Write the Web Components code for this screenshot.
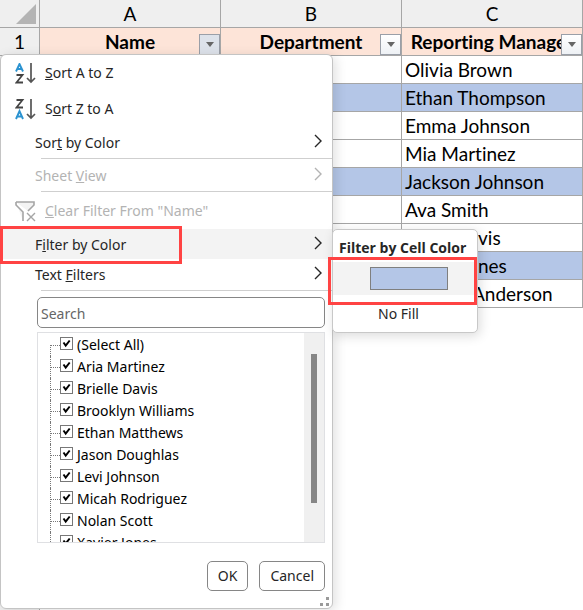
<!DOCTYPE html>
<html lang="en">
<head>
<meta charset="utf-8">
<meta name="viewport" content="width=device-width, initial-scale=1">
<title>Filter by Color</title>
<style>
  body {
    margin: 0;
    min-height: 100vh;
    position: relative;
    overflow: hidden;
    background: #fff;
    color: #262626;
    font: 14px/20px "Noto Sans", "Open Sans", sans-serif;
  }

  filter-menu {
    position: absolute;
    top: 54px;
    left: 0;
  }

  color-submenu {
    position: absolute;
    top: 229px;
    left: 332px;
  }

  mark-box {
    position: absolute;
  }

  .markItem {
    top: 226px;
    left: 0;
    width: 182px;
    height: 38px;
  }

  .markSwatch {
    top: 257px;
    left: 328px;
    width: 149px;
    height: 48px;
  }
</style>
</head>
<body>
  <work-sheet></work-sheet>

  <filter-menu>
    <menu-item size="tall" icon="az"><u>S</u>ort A to Z</menu-item>
    <menu-item size="tall" icon="za">S<u>o</u>rt Z to A</menu-item>
    <menu-item arrow>Sor<u>t</u> by Color</menu-item>
    <menu-line></menu-line>
    <menu-item arrow disabled>Sheet <u>V</u>iew</menu-item>
    <menu-line></menu-line>
    <menu-item size="tall" icon="clear" disabled><u>C</u>lear Filter From "Name"</menu-item>
    <menu-item arrow active>F<u>i</u>lter by Color</menu-item>
    <menu-item arrow>Text <u>F</u>ilters</menu-item>
    <menu-line></menu-line>
    <value-list slot="values">
      <check-item>(Select All)</check-item>
      <check-item>Aria Martinez</check-item>
      <check-item>Brielle Davis</check-item>
      <check-item>Brooklyn Williams</check-item>
      <check-item>Ethan Matthews</check-item>
      <check-item>Jason Doughlas</check-item>
      <check-item>Levi Johnson</check-item>
      <check-item>Micah Rodriguez</check-item>
      <check-item>Nolan Scott</check-item>
      <check-item>Xavier Jones</check-item>
    </value-list>
    <dialog-button slot="actions">OK</dialog-button>
    <dialog-button slot="actions">Cancel</dialog-button>
  </filter-menu>

  <color-submenu>
    <span slot="title">Filter by Cell Color</span>
    No Fill
  </color-submenu>

  <mark-box class="markItem"></mark-box>
  <mark-box class="markSwatch"></mark-box>

<script>
class BaseElement extends HTMLElement {
  constructor() {
    super();
    this.attachShadow({ mode: 'open' });
    const template = document.createElement('template');
    template.innerHTML = this.getTemplate();
    this.shadowRoot.appendChild(template.content.cloneNode(true));
  }
}

class WorkSheet extends BaseElement {
  getTemplate() {
    const columns = ['Name', 'Department', 'Reporting Manager'];
    const managers = [
      'Olivia Brown', 'Ethan Thompson', 'Emma Johnson', 'Mia Martinez',
      'Jackson Johnson', 'Ava Smith', 'Emily Davis', 'Oliver Jones', 'William Anderson'
    ];
    // rows that carry the blue cell fill
    const filled = [1, 4, 7];

    const rows = managers.map((name, i) => `
      <tr class="${filled.includes(i) ? 'filled' : ''}">
        <th scope="row">${i + 2}</th><td></td><td></td><td>${name}</td>
      </tr>`).join('');

    const emptyRows = Array.from({ length: 10 }, (_, i) => `
      <tr class="empty"><th scope="row">${i + 11}</th><td></td><td></td><td></td></tr>`).join('');

    return `
      <style>
        :host {
          display: block;
          color: #000;
          font: 19px/27px Lato, "Open Sans", sans-serif;
          font-variant-ligatures: none;
        }

        table {
          width: 100%;
          table-layout: fixed;
          border-collapse: separate;
          border-spacing: 0;
        }

        .rowHead {
          width: 40px;
        }

        th, td {
          box-sizing: border-box;
          height: 28px;
          padding: 0;
          border: 0 solid #a6a6a6;
          border-width: 0 1px 1px 0;
          white-space: nowrap;
          overflow: hidden;
        }

        td {
          padding-left: 3px;
        }

        thead th, tbody th {
          background: #efefef;
          font-weight: 400;
          text-align: center;
        }

        .fields th:not(:first-child) {
          position: relative;
          background: #fde4d8;
          font-weight: 700;
        }

        .filled td {
          background: #b4c6e7;
        }

        .empty td {
          border: 0;
        }

        .corner svg {
          display: block;
          margin: 4px 3px 3px auto;
        }

        button {
          position: absolute;
          right: 0;
          bottom: 0;
          display: grid;
          place-items: center;
          width: 21px;
          height: 21px;
          padding: 0;
          border: 1px solid #9a9fa8;
          background: linear-gradient(#fff, #eef1f5);
        }

        th:nth-child(2) button {
          background: #dde2ea;
        }
      </style>
      <table>
        <colgroup><col class="rowHead"><col><col><col></colgroup>
        <thead>
          <tr>
            <th class="corner"><svg width="20" height="20"><path d="M20 0v20H0z" fill="#b4b4b4"/></svg></th>
            <th scope="col">A</th><th scope="col">B</th><th scope="col">C</th>
          </tr>
          <tr class="fields">
            <th scope="row">1</th>
            ${columns.map(name => `
              <th scope="col">${name}<button aria-label="Filter ${name}"><svg width="8" height="5"><path d="M0 0h8L4 5z" fill="#666"/></svg></button></th>`).join('')}
          </tr>
        </thead>
        <tbody>${rows}${emptyRows}<tr class="empty"><th></th><td></td><td></td><td></td></tr></tbody>
      </table>`;
  }
}

class FilterMenu extends BaseElement {
  getTemplate() {
    return `
      <style>
        :host {
          display: block;
          box-sizing: border-box;
          width: 333px;
          border: 1px solid #c4c4c4;
          border-radius: 6px;
          background: #fff;
          box-shadow: 3px 2px 12px rgba(0, 0, 0, .12);
        }

        .body {
          display: flex;
          flex-direction: column;
          gap: 4px;
          padding: 5px 7px 0 36px;
        }

        input {
          box-sizing: border-box;
          width: 100%;
          height: 31px;
          padding: 2px 3px 0;
          border: 1px solid #868686;
          border-radius: 5px;
          font: inherit;
          color: inherit;
        }

        input::placeholder {
          color: #666;
          opacity: 1;
        }

        .actions {
          display: flex;
          justify-content: flex-end;
          gap: 11px;
          padding: 18px 7px 0;
        }

        .grip {
          display: block;
          margin: 6px 2px 2px auto;
        }
      </style>
      <slot></slot>
      <div class="body">
        <input type="text" placeholder="Search" aria-label="Search">
        <slot name="values"></slot>
      </div>
      <div class="actions"><slot name="actions"></slot></div>
      <svg class="grip" width="10" height="9" fill="#9a9a9a"><path d="M6 0h3v3H6zM0 6h3v3H0zM6 6h3v3H6z"/></svg>`;
  }
}

class MenuItem extends BaseElement {
  getTemplate() {
    const icons = {
      az: `<path d="M1 8.500 4.500 1 8 8.500M2.200 6h4.600" stroke="#2b93d1" stroke-width="1.900"/>
           <path d="M1.500 12h6L1.500 19.500h6.500" stroke="#444" stroke-width="1.800"/>
           <path d="M16 0v19M12 15l4 4 4-4" stroke="#555" stroke-width="1.700"/>`,
      za: `<path d="M1.500 1h6L1.500 8.500h6.500" stroke="#444" stroke-width="1.800"/>
           <path d="M1 20 4.500 12 8 20M2.200 17.500h4.600" stroke="#2b93d1" stroke-width="1.900"/>
           <path d="M16 0v19M12 15l4 4 4-4" stroke="#555" stroke-width="1.700"/>`,
      clear: `<path d="M1 1h18v3l-6 6M1 1v3l7 7v9" stroke="#a5a5a5" stroke-width="1.600" fill="#f3f3f3"/>
              <path d="M12 12l8 8M20 12l-8 8" stroke="#a5a5a5" stroke-width="1.400"/>`
    };
    const icon = icons[this.getAttribute('icon')];

    return `
      <style>
        :host {
          display: block;
        }

        button {
          display: flex;
          align-items: center;
          box-sizing: border-box;
          width: 100%;
          height: 30px;
          padding: 2px 10px 0 34px;
          border: 0;
          background: none;
          font: inherit;
          color: inherit;
          text-align: left;
        }

        span {
          flex: 1;
        }

        .arrow {
          margin-bottom: 5px;
        }

        :host([size=tall]) button {
          height: 36px;
          gap: 9px;
          padding: 0 10px 0 14px;
        }

        :host([active]) button {
          background: #f3f3f3;
        }

        :host([disabled]) {
          color: #b3b3b3;
        }
      </style>
      <button ${this.hasAttribute('disabled') ? 'disabled' : ''}>
        ${icon ? `<svg width="21" height="21" fill="none">${icon}</svg>` : ''}
        <span><slot></slot></span>
        ${this.hasAttribute('arrow') ? '<svg class="arrow" width="8" height="14" fill="none" stroke="currentColor" stroke-width="1.400"><path d="M1 1l6 6-6 6"/></svg>' : ''}
      </button>`;
  }
}

class MenuLine extends BaseElement {
  getTemplate() {
    return `
      <style>
        :host {
          display: block;
          height: 1px;
          margin: 1px 0 1px 40px;
          background: #cfcfcf;
        }
      </style>`;
  }
}

class ValueList extends BaseElement {
  getTemplate() {
    return `
      <style>
        :host {
          display: flex;
          box-sizing: border-box;
          height: 211px;
          border: 1px solid #dfe0e3;
          color: #000;
        }

        .items {
          flex: 1;
          padding: 1px 0 0 12px;
          overflow: hidden;
        }

        .track {
          width: 20px;
          padding: 21px 0 39px;
          box-sizing: border-box;
          background: #f0f0f0;
        }

        .thumb {
          width: 6px;
          height: 100%;
          margin: 0 auto;
          background: #868686;
        }
      </style>
      <div class="items"><slot></slot></div>
      <div class="track"><div class="thumb"></div></div>`;
  }
}

class CheckItem extends BaseElement {
  getTemplate() {
    return `
      <style>
        :host {
          display: block;
        }

        label {
          display: flex;
          gap: 4px;
          height: 22px;
          line-height: 22px;
          white-space: nowrap;
        }

        .branch {
          box-sizing: border-box;
          width: 10px;
          margin-right: -4px;
          border-left: 1px dotted #777;
        }

        .branch::after {
          content: "";
          display: block;
          height: 11px;
          border-bottom: 1px dotted #777;
        }

        :host(:first-child) .branch {
          height: 11px;
          margin-top: 11px;
        }

        :host(:first-child) .branch::after {
          height: 0;
        }

        input {
          appearance: none;
          box-sizing: border-box;
          width: 13px;
          height: 13px;
          margin: 3px 0 0;
          border: 1px solid #777;
          background: #fff;
        }

        input:checked {
          background: url('data:image/svg+xml,<svg xmlns="http://www.w3.org/2000/svg" width="11" height="11"><path d="M2.500 4.500 4.700 7.500 8.700 2.500" fill="none" stroke="black" stroke-width="2"/></svg>') center no-repeat;
        }
      </style>
      <label><span class="branch"></span><input type="checkbox" checked><span><slot></slot></span></label>`;
  }
}

class DialogButton extends BaseElement {
  getTemplate() {
    return `
      <style>
        :host {
          display: block;
        }

        button {
          height: 30px;
          padding: 0 10px;
          border: 1px solid #868686;
          border-radius: 5px;
          background: #fff;
          font: inherit;
          color: inherit;
        }
      </style>
      <button><slot></slot></button>`;
  }
}

class ColorSubmenu extends BaseElement {
  getTemplate() {
    return `
      <style>
        :host {
          display: block;
          box-sizing: border-box;
          width: 146px;
          border: 1px solid #c8c8c8;
          border-radius: 5px;
          background: #fff;
          box-shadow: 2px 3px 12px rgba(0, 0, 0, .14);
        }

        .title {
          padding: 8px 6px 4px;
          font-family: "Open Sans", sans-serif;
          font-weight: 700;
          white-space: nowrap;
        }

        button {
          display: block;
          width: 100%;
          padding: 0 0 0 45px;
          border: 0;
          background: none;
          font: inherit;
          color: inherit;
          text-align: left;
        }

        .swatch {
          padding: 5px 29px 5px 37px;
          background: #f3f3f3;
        }

        .swatch span {
          display: block;
          box-sizing: border-box;
          height: 23px;
          border: 1px solid #7f7f7f;
          background: #b4c6e7;
        }

        .none {
          height: 37px;
        }
      </style>
      <div class="title"><slot name="title"></slot></div>
      <button class="swatch" aria-label="Blue cell color"><span></span></button>
      <button class="none"><slot></slot></button>`;
  }
}

// Red frame that calls out a step
class MarkBox extends BaseElement {
  getTemplate() {
    return `
      <style>
        :host {
          display: block;
          box-sizing: border-box;
          border: 3px solid #ff4343;
          pointer-events: none;
        }
      </style>`;
  }
}

customElements.define('work-sheet', WorkSheet);
customElements.define('filter-menu', FilterMenu);
customElements.define('menu-item', MenuItem);
customElements.define('menu-line', MenuLine);
customElements.define('value-list', ValueList);
customElements.define('check-item', CheckItem);
customElements.define('dialog-button', DialogButton);
customElements.define('color-submenu', ColorSubmenu);
customElements.define('mark-box', MarkBox);
</script>
</body>
</html>
